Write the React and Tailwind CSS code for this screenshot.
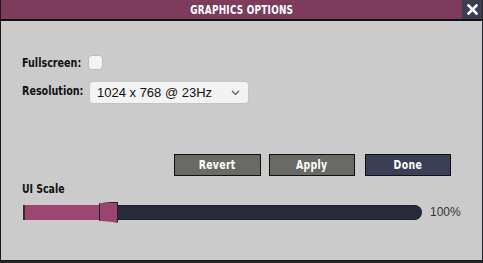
export default function App() {
  const pixel = { fontFamily: '"DejaVu Sans Condensed", "DejaVu Sans", sans-serif' };
  const sans = { fontFamily: '"Liberation Sans", Arial, sans-serif' };
  return (
    <div className="w-[483px] h-[263px] bg-[#24232a] overflow-hidden">
      <div className="w-[482px] h-[261px] bg-[#cbcbcb] border-l border-b border-[#1a1a1a] flex flex-col">
        <div className="h-[21px] flex border-b-2 border-[#121212] bg-[#7d3c5c]">
          <div className="flex-1 flex items-center justify-center pl-[20px]" style={pixel}>
            <span className="inline-block scale-x-[0.76] text-white font-bold text-[13px] tracking-[0.3px]">
              GRAPHICS OPTIONS
            </span>
          </div>
          <div className="w-[20px] bg-[#3a3e53] flex items-center justify-center">
            <svg width="11" height="11" viewBox="0 0 11 11" stroke="white" strokeWidth="2.6" strokeLinecap="square">
              <path d="M1.5 1.5 L9.5 9.5 M9.5 1.5 L1.5 9.5" />
            </svg>
          </div>
        </div>

        <div className="flex flex-col pl-[21px] pr-[22px]" style={pixel}>
          <div className="flex items-center mt-[29px]">
            <span className="w-[66px] shrink-0">
              <span className="inline-block origin-left scale-x-[0.82] text-[13px] font-bold text-[#111] whitespace-nowrap">Fullscreen:</span>
            </span>
            <span className="w-[15px] h-[15px] bg-[#f4f4f4] rounded-[4px] border border-[#bdbdbd]" />
          </div>
          <div className="flex items-start mt-[7px]">
            <span className="w-[67px] shrink-0 mt-[-3px]">
              <span className="inline-block origin-left scale-x-[0.82] text-[13px] font-bold text-[#111] whitespace-nowrap">Resolution:</span>
            </span>
            <div
              className="w-[160px] h-[23px] bg-[#f3f3f3] rounded-[4px] border border-[#c4c4c4] flex items-center justify-between pl-[7px] pr-[8px] text-[13px] text-[#111]"
              style={sans}
            >
              <span>1024 x 768 @ 23Hz</span>
              <svg width="9" height="6" viewBox="0 0 9 6" fill="none" stroke="#555" strokeWidth="1.2">
                <path d="M1 1 L4.5 4.5 L8 1" />
              </svg>
            </div>
          </div>

          <div className="flex justify-end gap-[8px] mt-[50px] mr-[9px]">
            <button className="w-[87px] h-[22px] bg-[#6a6a64] border border-[#111] text-white font-bold text-[13px]">
              <span className="inline-block scale-x-[0.8] tracking-[0.4px]">Revert</span>
            </button>
            <button className="w-[86px] h-[22px] bg-[#6a6a64] border border-[#111] text-white font-bold text-[13px] mr-[2px]">
              <span className="inline-block scale-x-[0.8] tracking-[0.4px]">Apply</span>
            </button>
            <button className="w-[86px] h-[22px] bg-[#3b3f56] border border-[#111] text-white font-bold text-[13px]">
              <span className="inline-block scale-x-[0.8] tracking-[0.4px]">Done</span>
            </button>
          </div>

          <div className="mt-[5px] leading-[14px]">
            <span className="inline-block origin-left scale-x-[0.8] text-[13px] font-bold text-[#111] whitespace-nowrap">UI Scale</span>
          </div>
          <div className="flex items-center mt-[7px]">
            <div className="relative shrink-0 w-[399px] h-[15px] ml-[1px] bg-[#262a3b] rounded-r-full border-y border-[#1c1e28]">
              <div className="absolute left-0 top-[-1px] h-[15px] w-[78px] bg-[#9c4772] border-l-2 border-[#3a2a34]" />
              <div
                className="absolute left-[76px] top-[-4px] w-[19px] h-[21px] bg-[#9a4571] border border-[#2a1e26]"
                style={{ clipPath: 'polygon(0 8%, 100% 0, 100% 100%, 0 92%)' }}
              />
            </div>
            <span className="ml-[8px] text-[12px] text-[#333]" style={sans}>
              100%
            </span>
          </div>
        </div>
      </div>
    </div>
  );
}
